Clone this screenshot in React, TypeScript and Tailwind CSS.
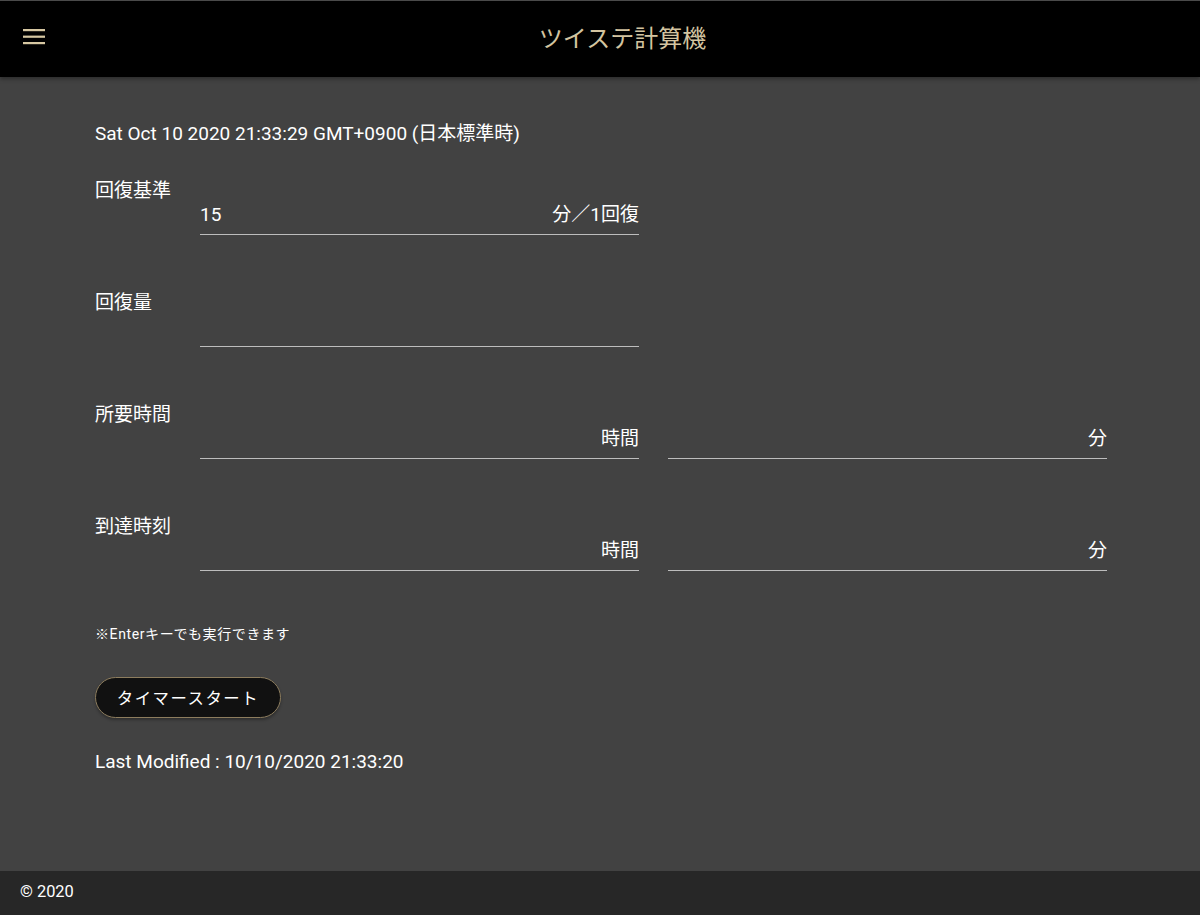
import React from "react";

const latin = { fontFamily: 'Roboto, "Noto Sans CJK JP", sans-serif' };
const cjk = { fontFamily: '"Noto Sans CJK JP", Roboto, sans-serif' };

function Field({ value, suffix }: { value?: string; suffix?: string }) {
  return (
    <div className="w-[439px] h-[33px] border-b border-[#bdbdbd] flex items-start">
      <div className="h-[24px] flex items-center justify-between w-full leading-none">
        <span>{value ?? ""}</span>
        <span>{suffix ?? ""}</span>
      </div>
    </div>
  );
}

function Row({ label, children, first }: { label: string; children: React.ReactNode; first?: boolean }) {
  return (
    <div className={first ? "mt-[33px]" : "mt-[55px]"}>
      <div className="h-[24px] flex items-center leading-none">{label}</div>
      <div className="flex gap-[29px] pl-[105px]">{children}</div>
    </div>
  );
}

export default function App() {
  return (
    <div className="w-[1200px] h-[915px] flex flex-col bg-[#424242] text-white overflow-hidden" style={latin}>
      <header className="h-[77px] bg-black flex items-center relative z-10 shadow-[0_2px_4px_rgba(0,0,0,0.35)] border-t border-[#4a4a4a]">
        <div className="pl-[23px] w-[45px] flex items-center">
          <svg width="22" height="16" viewBox="0 0 22 16" className="-mt-[4px]">
            <rect x="0" y="0" width="22" height="2.2" fill="#d6c7a2" />
            <rect x="0" y="6.6" width="22" height="2.2" fill="#d6c7a2" />
            <rect x="0" y="13" width="22" height="2.2" fill="#d6c7a2" />
          </svg>
        </div>
        <div className="flex-1 text-center text-[24px] text-[#d3c4a0] -mt-[4px]" style={cjk}>
          ツイステ計算機
        </div>
      </header>

      <main className="flex-1 pl-[95px] pt-[44px] text-[19px]">
        <div className="h-[24px] flex items-center leading-none">
          Sat Oct 10 2020 21:33:29 GMT+0900 (日本標準時)
        </div>

        <Row label="回復基準" first>
          <Field value="15" suffix="分／1回復" />
        </Row>
        <Row label="回復量">
          <Field />
        </Row>
        <Row label="所要時間">
          <Field suffix="時間" />
          <Field suffix="分" />
        </Row>
        <Row label="到達時刻">
          <Field suffix="時間" />
          <Field suffix="分" />
        </Row>

        <div className="mt-[53px] h-[20px] flex items-center text-[14px] tracking-[0.6px] leading-none">
          ※Enterキーでも実行できます
        </div>

        <button
          className="mt-[33px] w-[186px] h-[41px] rounded-full bg-[#111111] border border-[#8d7d5e] text-white text-[16.4px] tracking-[1.5px] flex items-center justify-center shadow-[0_2px_3px_rgba(0,0,0,0.3)]"
          style={cjk}
        >
          タイマースタート
        </button>

        <div className="mt-[31px] h-[24px] flex items-center leading-none">
          Last Modified : 10/10/2020 21:33:20
        </div>
      </main>

      <footer className="h-[44px] bg-[#272727] flex items-center pl-[20px] text-[16.4px] pb-[2px]">
        © 2020
      </footer>
    </div>
  );
}
